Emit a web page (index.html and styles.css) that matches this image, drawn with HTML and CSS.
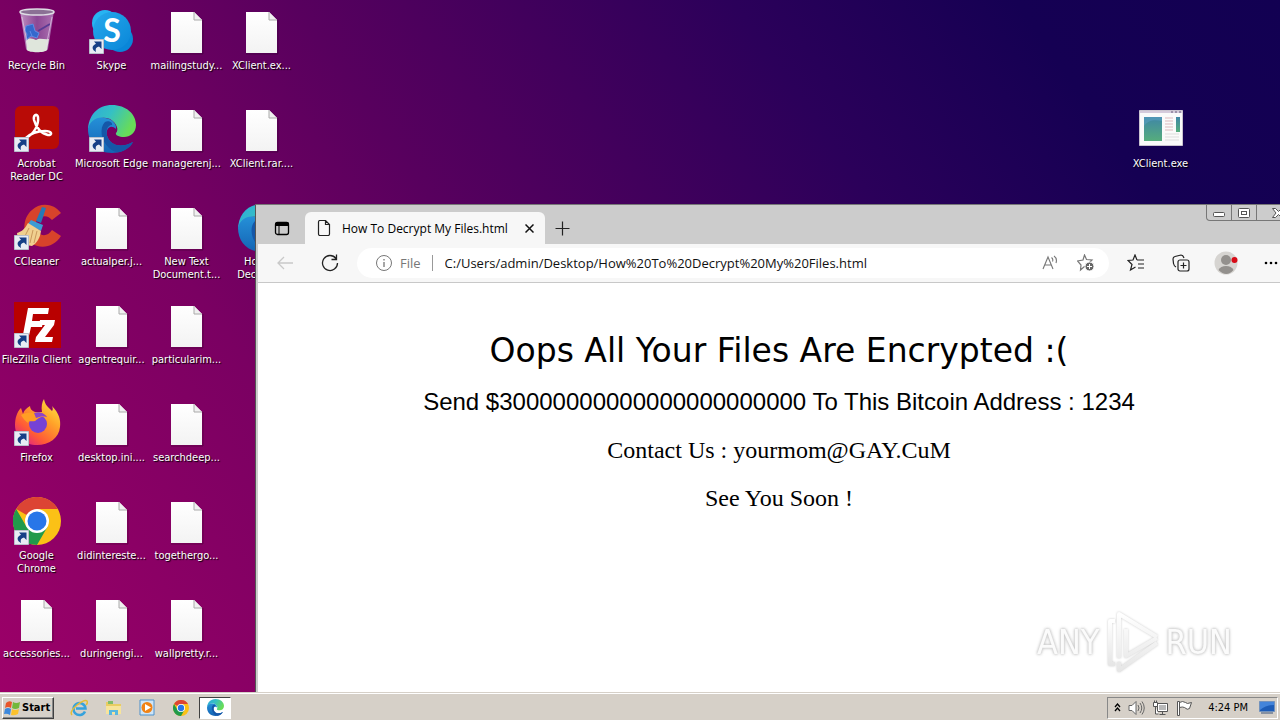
FILE: index.html
```html
<!DOCTYPE html>
<html lang="en">
<head>
<meta charset="utf-8">
<title>Desktop</title>
<link rel="stylesheet" href="styles.css">
</head>
<body>
<svg class="defs" aria-hidden="true">
  <defs>
    <linearGradient id="paper" x1="0" y1="0" x2="0" y2="1"><stop offset="0" stop-color="#fff"/><stop offset="1" stop-color="#f3f3f3"/></linearGradient>
    <linearGradient id="edgeTop" x1="0" y1="0" x2="1" y2=".4"><stop offset="0" stop-color="#2da8dc"/><stop offset=".5" stop-color="#35c0c4"/><stop offset="1" stop-color="#68dc58"/></linearGradient>
    <linearGradient id="edgeSide" x1="0" y1="0" x2="0" y2="1"><stop offset="0" stop-color="#2590d8"/><stop offset="1" stop-color="#1464b4"/></linearGradient>
    <linearGradient id="fire" x1="1" y1="0" x2=".2" y2="1"><stop offset="0" stop-color="#fff04a"/><stop offset=".4" stop-color="#ffa329"/><stop offset=".75" stop-color="#ff5a36"/><stop offset="1" stop-color="#e0208a"/></linearGradient>
    <linearGradient id="glass" x1="0" y1="0" x2="1" y2="0"><stop offset="0" stop-color="#d9c4e4" stop-opacity=".75"/><stop offset=".5" stop-color="#9a78b6" stop-opacity=".6"/><stop offset="1" stop-color="#c7a6d6" stop-opacity=".7"/></linearGradient>
    <linearGradient id="sky" x1="0" y1="0" x2="1" y2="1"><stop offset="0" stop-color="#26a9ec"/><stop offset="1" stop-color="#0a86d8"/></linearGradient>
    <linearGradient id="exe" x1="0" y1="0" x2="0" y2="1"><stop offset="0" stop-color="#3f86a6"/><stop offset="1" stop-color="#56ad7c"/></linearGradient>
    <linearGradient id="mark" x1="0" y1="0" x2="0" y2="1"><stop offset="0" stop-color="#fff"/><stop offset="1" stop-color="#e6e6e6"/></linearGradient>
  </defs>
  <symbol id="file" viewBox="0 0 48 48">
    <path d="M8 46h32V12" fill="none" stroke="#000" stroke-opacity=".25"/>
    <path d="M8 4h23l8 8v33H8z" fill="url(#paper)"/>
    <path d="M31 4v8h8" fill="#f0f0f0" stroke="#aaa"/>
  </symbol>
  <symbol id="shortcut" viewBox="0 0 15 15">
    <path d="M.5.5h14v14H.5z" fill="#e8ecf4" stroke="#b9bfcc"/>
    <path d="M5 2.500h7.500V10L10 7.500C7 8 6 10 7 13 3 11 2 7 7 4.800z" fill="#163f86"/>
  </symbol>
  <symbol id="edge" viewBox="0 0 48 48">
    <path d="M0 26C0 10 10 0 24 0c14 0 24 9 24 20 0 8-6 12-12 12-5 0-9-2-8-4 3-3 1-10-6-14C13 10 2 15 0 26z" fill="url(#edgeTop)"/>
    <path d="M0 24c2-9 10-13 17-11 8 1 12 7 11 11-6-6-12 1-8 9 4 8 14 10 25 4-5 8-13 11-21 11C9 48 0 37 0 24z" fill="url(#edgeSide)"/>
    <path d="M17 17c-6 6-4 19 4 26 5 5 11 5 16 2 4-2 7-5 8-8-11 6-21 4-25-4-3-6-1-13 4-13 1-3-4-5-7-3z" fill="#1557a8"/>
  </symbol>
  <symbol id="chrome" viewBox="0 0 48 48">
    <circle cx="24" cy="24" r="24" fill="#fbc116"/>
    <path d="M24 24L3.200 12A24 24 0 0 1 44.800 12H24z" fill="#dc4434"/>
    <path d="M3.200 12A24 24 0 0 0 24 48l10.400-18-10.400-6-10.400 6z" fill="#219a4b"/>
    <circle cx="24" cy="24" r="12" fill="#fff"/><circle cx="24" cy="24" r="9.500" fill="#2876e8"/>
  </symbol>
</svg>

<div class="screen">
  <main class="desktop">
    <ul class="icons">
      <li class="item"><svg class="pic" viewBox="0 0 48 48"><path d="M7 3l6 38c1 4 21 4 22 0l6-38z" fill="url(#glass)"/><path d="M13 33c3-4 7-2 10-1 4-3 8 0 13-1l-2 11c-2 3-18 3-20 0z" fill="#dfe6dc"/><path d="M13 18l7-2 2 7 4 2-2 5-6-2-5 4 1-6-2-3zm4 5 2 5" fill="#3568cd" stroke="#5f8ce6"/><path d="M25 23l12-7" stroke="#5a3b94" stroke-width="2"/><path d="M9 9l6 30M39 9l-6 30" stroke="#ecd9f0" stroke-opacity=".6"/><ellipse cx="24" cy="4" rx="17" ry="3" fill="#8b7195" stroke="#dedce4" stroke-width="1.500"/></svg><span class="name">Recycle Bin</span></li>
      <li class="item"><svg class="pic" viewBox="0 0 48 48"><rect x="2" y="0" width="44" height="43" rx="6" fill="#b90b06"/><path d="M13 32c8-4 13-13 12-21-1-4-5-2-4 3 2 8 8 14 14 15 5 0 4-4-3-4-9 0-15 3-19 7" fill="none" stroke="#fff" stroke-width="2.500"/><use href="#shortcut" x="1" y="31" width="15" height="15"/></svg><span class="name">Acrobat Reader DC</span></li>
      <li class="item"><svg class="pic" viewBox="0 0 48 48"><path d="M48 9C41-1 27-2 19 6 9 14 9 32 18 39c10 7 23 4 30-7l-9-6c-4 6-10 7-14 2-4-6-3-13 3-15 5-2 8 0 11 3z" fill="#d8432b"/><path d="M29 3l4 1-5 15-5-2z" fill="#2579b8"/><path d="M18 16l12 5-2 6-13-7z" fill="#3c9cd4"/><path d="M15 19l13 8c-1 7-4 12-9 15C11 41 4 37 4 29c4-1 8-4 11-10z" fill="#f0d08f"/><path d="M16 24l-6 12m10-10-3 13m7-12-3 12" stroke="#c9985c"/><use href="#shortcut" x="1" y="31" width="15" height="15"/></svg><span class="name">CCleaner</span></li>
      <li class="item"><svg class="pic" viewBox="0 0 48 48"><path d="M1 0h47v46H1z" fill="#b90000"/><path d="M9 38L15 6h21l-1 6H20l-1 7h11l-1 6H18l-3 13zM27 18h15l-1 5-9 12h8l-1 5H22l1-5 9-12h-6z" fill="#fff"/><use href="#shortcut" x="1" y="31" width="15" height="15"/></svg><span class="name">FileZilla Client</span></li>
      <li class="item"><svg class="pic" viewBox="0 0 48 48"><path d="M31-1c1 6 4 8 8 12 1-1 1-3 0-5 7 7 9 14 8 21-1 11-11 18-23 18C11 45 2 37 2 25c0-7 2-13 6-17l2 6c1-4 4-6 7-8 0 3 2 5 5 6h7c-1-5 0-10 2-13z" fill="url(#fire)"/><circle cx="25" cy="24" r="9" fill="#7542d6"/><path d="M8 15c6-3 9-2 13-2 5-2 10 1 13 5-7-3-9 1-12 3-3 1-6-1-7 2-3-2-5-5-7-8z" fill="#ff9e24"/><path d="M21 13c6-2 11 1 13 4-5-1-8 0-11 1z" fill="#8c43c9"/><use href="#shortcut" x="1" y="31" width="15" height="15"/></svg><span class="name">Firefox</span></li>
      <li class="item"><svg class="pic" viewBox="0 0 48 48"><use href="#chrome" y="-1" width="48" height="48"/><use href="#shortcut" x="1" y="32" width="15" height="15"/></svg><span class="name">Google Chrome</span></li>
      <li class="item"><svg class="pic"><use href="#file"/></svg><span class="name">accessories...</span></li>

      <li class="item"><svg class="pic" viewBox="0 0 48 48"><circle cx="17" cy="15" r="13" fill="#27b4f2"/><circle cx="32" cy="31" r="13" fill="#0a86d8"/><circle cx="24" cy="23" r="19" fill="url(#sky)"/><text class="skype-s" x="24" y="34" text-anchor="middle">S</text><use href="#shortcut" x="1" y="31" width="15" height="15"/></svg><span class="name">Skype</span></li>
      <li class="item"><svg class="pic" viewBox="0 0 48 48"><use href="#edge" y="-1" width="48" height="48"/><use href="#shortcut" x="1" y="31" width="15" height="15"/></svg><span class="name">Microsoft Edge</span></li>
      <li class="item"><svg class="pic"><use href="#file"/></svg><span class="name">actualper.j...</span></li>
      <li class="item"><svg class="pic"><use href="#file"/></svg><span class="name">agentrequir...</span></li>
      <li class="item"><svg class="pic"><use href="#file"/></svg><span class="name">desktop.ini....</span></li>
      <li class="item"><svg class="pic"><use href="#file"/></svg><span class="name">didintereste...</span></li>
      <li class="item"><svg class="pic"><use href="#file"/></svg><span class="name">duringengi...</span></li>

      <li class="item"><svg class="pic"><use href="#file"/></svg><span class="name">mailingstudy...</span></li>
      <li class="item"><svg class="pic"><use href="#file"/></svg><span class="name">managerenj...</span></li>
      <li class="item"><svg class="pic"><use href="#file"/></svg><span class="name">New Text<br>Document.t...</span></li>
      <li class="item"><svg class="pic"><use href="#file"/></svg><span class="name">particularim...</span></li>
      <li class="item"><svg class="pic"><use href="#file"/></svg><span class="name">searchdeep...</span></li>
      <li class="item"><svg class="pic"><use href="#file"/></svg><span class="name">togethergo...</span></li>
      <li class="item"><svg class="pic"><use href="#file"/></svg><span class="name">wallpretty.r...</span></li>

      <li class="item"><svg class="pic"><use href="#file"/></svg><span class="name">XClient.ex...</span></li>
      <li class="item"><svg class="pic"><use href="#file"/></svg><span class="name">XClient.rar....</span></li>
      <li class="item"><svg class="pic"><use href="#edge"/></svg><span class="name">How To<br>Decrypt...</span></li>
    </ul>

    <div class="item loose"><svg class="pic" viewBox="0 0 48 48"><path d="M2.500 4.500h43v35h-43z" fill="#fafafa" stroke="#c9c3cf"/><path d="M3 5h42v2H3z" fill="#d5cbdc"/><path d="M34 6h2m2 0h2m2 0h2" stroke="#655a78"/><path d="M7 11h18v24H7z" fill="url(#exe)"/><path d="M7 20c5-7 12-6 18-5v-4H7z" fill="#5a9fc0" opacity=".6"/><path d="M28 12h8m-8 3h8m-8 3h8m-8 3h8m-8 3h8" stroke="#dcb9bd"/><path d="M28 28h14m-14 3h14m-14 3h14" stroke="#ddd"/><path d="M39 11h4v15h-4z" fill="url(#exe)"/></svg><span class="name">XClient.exe</span></div>

    <section class="window" aria-label="How To Decrypt My Files.html">
      <header class="tabs">
        <button class="tool" aria-label="Tab actions"><svg width="16" height="16" viewBox="0 0 16 16"><rect x="1.500" y="2.500" width="13" height="12" rx="2" fill="none" stroke="#000" stroke-width="1.300"/><path d="M1 6V4q0-2 2-2h10q2 0 2 2v2z"/><path d="M5 6v8" stroke="#000"/></svg></button>
        <div class="tab">
          <svg width="14" height="16" viewBox="0 0 14 16" fill="none" stroke="#222" stroke-width="1.200"><path d="M1.500 2q0-1.500 1.500-1.500h5.500l4 4V14q0 1.500-1.500 1.500H3q-1.500 0-1.500-1.500zM8.500.5v4h4"/></svg>
          <span class="title">How To Decrypt My Files.html</span>
          <button class="close" aria-label="Close tab"><svg width="9" height="9" viewBox="0 0 9 9" stroke="#111" stroke-width="1.500"><path d="M.5.5l8 8m0-8-8 8"/></svg></button>
        </div>
        <button class="tool new" aria-label="New tab"><svg width="15" height="15" viewBox="0 0 15 15" stroke="#222" stroke-width="1.200"><path d="M7.500.5v14M.5 7.500h14"/></svg></button>
        <div class="controls">
          <button aria-label="Minimize"><svg width="12" height="8" viewBox="0 0 12 8"><rect x=".5" y="3.500" width="11" height="4" rx="1" fill="#fff" stroke="#555"/></svg></button>
          <button aria-label="Maximize"><svg width="12" height="10" viewBox="0 0 12 10" fill="#fff" stroke="#555"><rect x=".5" y=".5" width="11" height="9" rx="1"/><rect x="3.500" y="3.500" width="5" height="3"/></svg></button>
          <button class="wide" aria-label="Close"><svg width="13" height="10" viewBox="0 0 13 10" fill="#fff" stroke="#555"><path d="M.5.5h3l3 3 3-3h3L9 5l3.500 4.500h-3l-3-3-3 3h-3L4 5z"/></svg></button>
        </div>
      </header>
      <nav class="toolbar">
        <button class="tool" aria-label="Back"><svg width="16" height="14" viewBox="0 0 16 14" fill="none" stroke="#c9c9c9" stroke-width="1.300"><path d="M7 1L1 7l6 6M1 7h15"/></svg></button>
        <button class="tool" aria-label="Refresh"><svg width="18" height="18" viewBox="0 0 18 18" fill="none" stroke="#222" stroke-width="1.300"><path d="M15 4.500A7.500 7.500 0 1 0 16.500 9M15.500.5v5h-5"/></svg></button>
        <div class="address">
          <svg width="16" height="16" viewBox="0 0 16 16" fill="none" stroke="#777"><circle cx="8" cy="8" r="7.500"/><path d="M8 7v5M8 4v1.500" stroke-width="1.300"/></svg>
          <label class="scheme" for="url">File</label>
          <input id="url" class="url" type="text" value="C:/Users/admin/Desktop/How%20To%20Decrypt%20My%20Files.html">
          <button class="mini" aria-label="Read aloud"><svg width="16" height="16" viewBox="0 0 16 16" fill="none" stroke="#777" stroke-width="1.100"><path d="M1 14L6 2l5 12M3 10h6M9.500 2.500q2 1.500 1 4M12 1q3.500 2.500 2 7"/></svg></button>
          <button class="mini" aria-label="Add to favorites"><svg width="18" height="18" viewBox="0 0 18 18"><path d="M7.500 1l2 4.500 5.500.5-4 4 .5 4-4-1.500L3.500 16l.5-5-3.500-4L6 6z" fill="none" stroke="#777" stroke-width="1.200"/><circle cx="12.500" cy="12.500" r="4.500" fill="#666" stroke="#fff"/><path d="M12.500 10v5M10 12.500h5" stroke="#fff"/></svg></button>
        </div>
        <button class="tool" aria-label="Favorites"><svg width="18" height="18" viewBox="0 0 18 18" fill="none" stroke="#222" stroke-width="1.200"><path d="M10 6L8 1 6 6l-5 .5 4 4L3.500 16l5-3M10 6h7m-6 4h6m-6 4h6"/></svg></button>
        <button class="tool" aria-label="Collections"><svg width="18" height="18" viewBox="0 0 18 18" fill="none" stroke="#222" stroke-width="1.200"><rect x="6" y="6" width="11" height="11" rx="2"/><path d="M11.500 8.500v6M8.500 11.500h6M4 13Q2 12 1.500 9.500L1 5q0-2 2-2.500L9 1q2 0 3 3"/></svg></button>
        <button class="tool" aria-label="Profile"><svg width="24" height="24" viewBox="0 0 24 24"><circle cx="12" cy="12" r="11.500" fill="#d6d4d1"/><circle cx="12" cy="9" r="5" fill="#93908d"/><path d="M4.500 19q2-4 7.500-4t7.500 4q-7 8-15 0z" fill="#93908d"/><circle cx="20.500" cy="9" r="3" fill="#d70b17"/></svg></button>
        <button class="tool" aria-label="More"><svg width="14" height="4" viewBox="0 0 14 4"><circle cx="2" cy="2" r="1.300"/><circle cx="7" cy="2" r="1.300"/><circle cx="12" cy="2" r="1.300"/></svg></button>
      </nav>
      <article class="page">
        <h1 class="headline">Oops All Your Files Are Encrypted :(</h1>
        <p class="demand">Send $30000000000000000000000 To This Bitcoin Address : 1234</p>
        <p class="line">Contact Us : yourmom@GAY.CuM</p>
        <p class="line">See You Soon !</p>
      </article>
    </section>

    <div class="watermark"><span>ANY</span><svg width="60" height="64" viewBox="0 0 60 64" fill="none" stroke="url(#mark)" stroke-width="4" stroke-linejoin="round"><path d="M17 48V4l38 23M24 19v27l31-18M17 52v8l38-27"/><path d="M13 11H8v43h5"/></svg><span>RUN</span></div>
  </main>

  <footer class="taskbar">
    <button class="start"><svg width="17" height="16" viewBox="0 0 17 16"><path d="M2 3q3-3 6-1L7 8Q4 6 1 8z" fill="#e8562b"/><path d="M9 2q3 2 7 0l-1 6q-4 2-7 0z" fill="#73b83c"/><path d="M1 9q3-2 6 0l-1 6q-3-2-6-1z" fill="#3d88dc"/><path d="M8 9q3 2 7 0l-1 5q-4 2-7 1z" fill="#fcc22e"/></svg>Start</button>
    <div class="launch">
      <button aria-label="Internet Explorer"><svg width="18" height="18" viewBox="0 0 18 18" fill="none"><path d="M15 12.500A6 6 0 1 1 15.500 9.500H6" stroke="#36a2dc" stroke-width="2.500"/><path d="M2 16Q-1 13 7 6q8-6 10-4 1 2-1 4" stroke="#e5bd35" stroke-width="1.500"/></svg></button>
      <button aria-label="File Explorer"><svg width="17" height="17" viewBox="0 0 17 17"><path d="M1 3h5l2 2h8v8H1z" fill="#e9cd62"/><path d="M3 2h5v3H3z" fill="#82bd69"/><path d="M1 7h15v8H1z" fill="#f7e49b"/><path d="M4 16v-5h9v5h-3v-3H7v3z" fill="#59b7df"/></svg></button>
      <button aria-label="Media Player"><svg width="16" height="17" viewBox="0 0 16 17"><path d="M1 1h14v15H1z" fill="#cfe5f7" stroke="#4d91cc"/><circle cx="8" cy="8.500" r="5.500" fill="#f18316"/><path d="M6 5l6 3.500L6 12z" fill="#fff"/></svg></button>
      <button aria-label="Google Chrome"><svg width="16" height="16"><use href="#chrome"/></svg></button>
      <button class="active" aria-label="Microsoft Edge"><svg width="17" height="17"><use href="#edge"/></svg></button>
    </div>
    <div class="tray">
      <svg width="7" height="9" viewBox="0 0 7 9" fill="none" stroke="#000" stroke-width="1.300"><path d="M1 4l2.500-3L6 4M1 8l2.500-3L6 8"/></svg>
      <svg width="17" height="16" viewBox="0 0 17 16" fill="#fff" stroke="#666"><path d="M1 5.500h3l4-4v13l-4-4H1z"/><path d="M10 5q2 3 0 6M12 3q3.500 5 0 10M14 1.500q4.500 6.500 0 13" fill="none"/></svg>
      <svg width="17" height="16" viewBox="0 0 17 16" fill="#fff" stroke="#555"><path d="M5.500 3.500h10v8h-10zM7.500 14.500h6M10.500 12v2"/><path d="M7 5h7v5H7z" fill="#b8b8b8" stroke="none"/><path d="M1.500 2.500h4v4h-4zM2.500.5v2M4.500.5v2M3.500 7v7h3" /></svg>
      <svg width="17" height="16" viewBox="0 0 17 16" fill="#fff" stroke="#555"><path d="M3.500 2.500q3-2 6 0 1 2 6 0l-2 6q-2 2-5-1-2-1-5 0z"/><path d="M1.500 1.500h2v14h-2z"/></svg>
      <time class="clock">4:24 PM</time>
      <svg width="16" height="13" viewBox="0 0 16 13"><path d="M.5.5h15v10H.5z" fill="#1d5cb7" stroke="#7292bd"/><path d="M1 1h14v3Q7 4 1 9z" fill="#4384da"/><path d="M2 12h12" stroke="#38537b"/></svg>
    </div>
  </footer>
</div>
</body>
</html>
```
FILE: styles.css
```css
* { box-sizing: border-box; }
body { margin: 0; font-family: "DejaVu Sans Condensed", "DejaVu Sans", sans-serif; font-size: 11px; color: #000; }
button { margin: 0; padding: 0; border: 0; background: none; font: inherit; color: inherit; display: grid; place-items: center; }
svg { display: block; flex: none; }
.defs { position: absolute; width: 0; height: 0; }

.screen { display: flex; flex-direction: column; height: 100vh; overflow: hidden; background: #3b005c; }
.desktop { position: relative; flex: 1; min-height: 0; overflow: hidden; background: linear-gradient(55deg, #9c0068 0%, #7a0062 27%, #58005e 44%, #2b005a 69%, #150053 85%, #120052 100%); }

.icons { display: grid; grid-template-rows: repeat(7, 98px); grid-auto-columns: 75px; grid-auto-flow: column; margin: 0 0 0 -1px; padding: 8px 0 0; list-style: none; }
.item { display: flex; flex-direction: column; align-items: center; gap: 3px; color: #fff; }
.pic { width: 48px; height: 48px; overflow: visible; }
.name { line-height: 13px; text-align: center; text-shadow: 1px 1px 1px #000; }
.skype-s { font: bold 32px Lato, sans-serif; fill: #fff; }
.loose { position: absolute; top: 106px; left: 1123px; width: 75px; }

.window { position: absolute; top: 204px; left: 255px; right: -23px; bottom: 0; display: flex; flex-direction: column; padding: 0 3px 0 2px; border-top: 1px solid #777; border-left: 1px solid #555; background: #ccc; font-family: "Open Sans", "Noto Sans", sans-serif; }
.tabs { display: flex; height: 39px; padding-left: 6px; align-items: flex-end; }
.tool { width: 36px; height: 30px; }
.tabs .tool { height: 32px; }
.tabs .new { width: 34px; }
.tab { display: flex; align-items: center; width: 240px; height: 32px; margin-left: 5px; padding: 0 10px 0 12px; gap: 11px; border-radius: 6px 6px 0 0; background: #f7f7f7; }
.title { flex: 1; font-size: 12px; white-space: nowrap; }
.close { width: 12px; height: 20px; }
.controls { display: flex; align-self: flex-start; margin-left: auto; height: 16px; border: 1px solid #777; border-top: 0; border-radius: 0 0 4px 4px; }
.controls button { width: 25px; border-right: 1px solid #777; }
.controls .wide { width: 42px; border: 0; }
.toolbar { display: flex; align-items: center; gap: 9px; height: 39px; padding: 0 11px 0 9px; border-bottom: 1px solid #c8c8c8; background: #f7f7f7; }
.address { display: flex; flex: 1; align-items: center; height: 30px; padding: 0 14px 0 19px; border-radius: 15px; background: #fff; }
.scheme { margin-left: 8px; padding-right: 11px; border-right: 1px solid #999; font-size: 13px; line-height: 16px; color: #777; }
.url { flex: 1; min-width: 0; margin-left: 12px; padding: 0; border: 0; outline: 0; background: none; font: inherit; font-size: 13px; color: #111; }
.mini { width: 18px; height: 24px; margin-left: 18px; }

.page { flex: 1; padding-top: 49px; background: #fff; text-align: center; }
.page > * { margin: 0; font-weight: 400; }
.page .headline { font: 33px/38px "DejaVu Sans", Verdana, sans-serif; }
.page .demand { margin-top: 18px; font: 24px/28px "Liberation Sans", Arial, sans-serif; }
.page .line { margin-top: 20px; font: 24px/28px "Liberation Serif", "Times New Roman", serif; }

.watermark { position: absolute; right: 48px; bottom: 18px; display: flex; align-items: center; gap: 3px; font: 34px/44px "DejaVu Sans Condensed", sans-serif; color: #fbfbfb; text-shadow: 0 0 3px #ccc; filter: drop-shadow(0 0 1px #ccc); }

.taskbar { display: flex; align-items: center; height: 28px; padding: 2px 2px 0; border-top: 1px solid #d6d0c8; background: #d6d0c8; box-shadow: inset 0 1px #fff; }
.start { display: flex; align-items: center; gap: 1px; height: 22px; padding: 0 3px 0 1px; border: 1px solid; border-color: #fff #404040 #404040 #fff; box-shadow: inset -1px -1px #888; font-weight: 700; font-size: 11px; }
.launch { display: flex; gap: 2px; margin-left: 9px; }
.launch button { width: 32px; height: 22px; }
.launch .active { background: #fff; border: 1px solid; border-color: #404040 #fff #fff #404040; }
.tray { display: flex; align-items: center; gap: 7px; height: 22px; margin-left: auto; padding: 0 2px 0 6px; border: 1px solid; border-color: #888 #fff #fff #888; }
.clock { margin: 0 4px 0 8px; white-space: nowrap; }
```
